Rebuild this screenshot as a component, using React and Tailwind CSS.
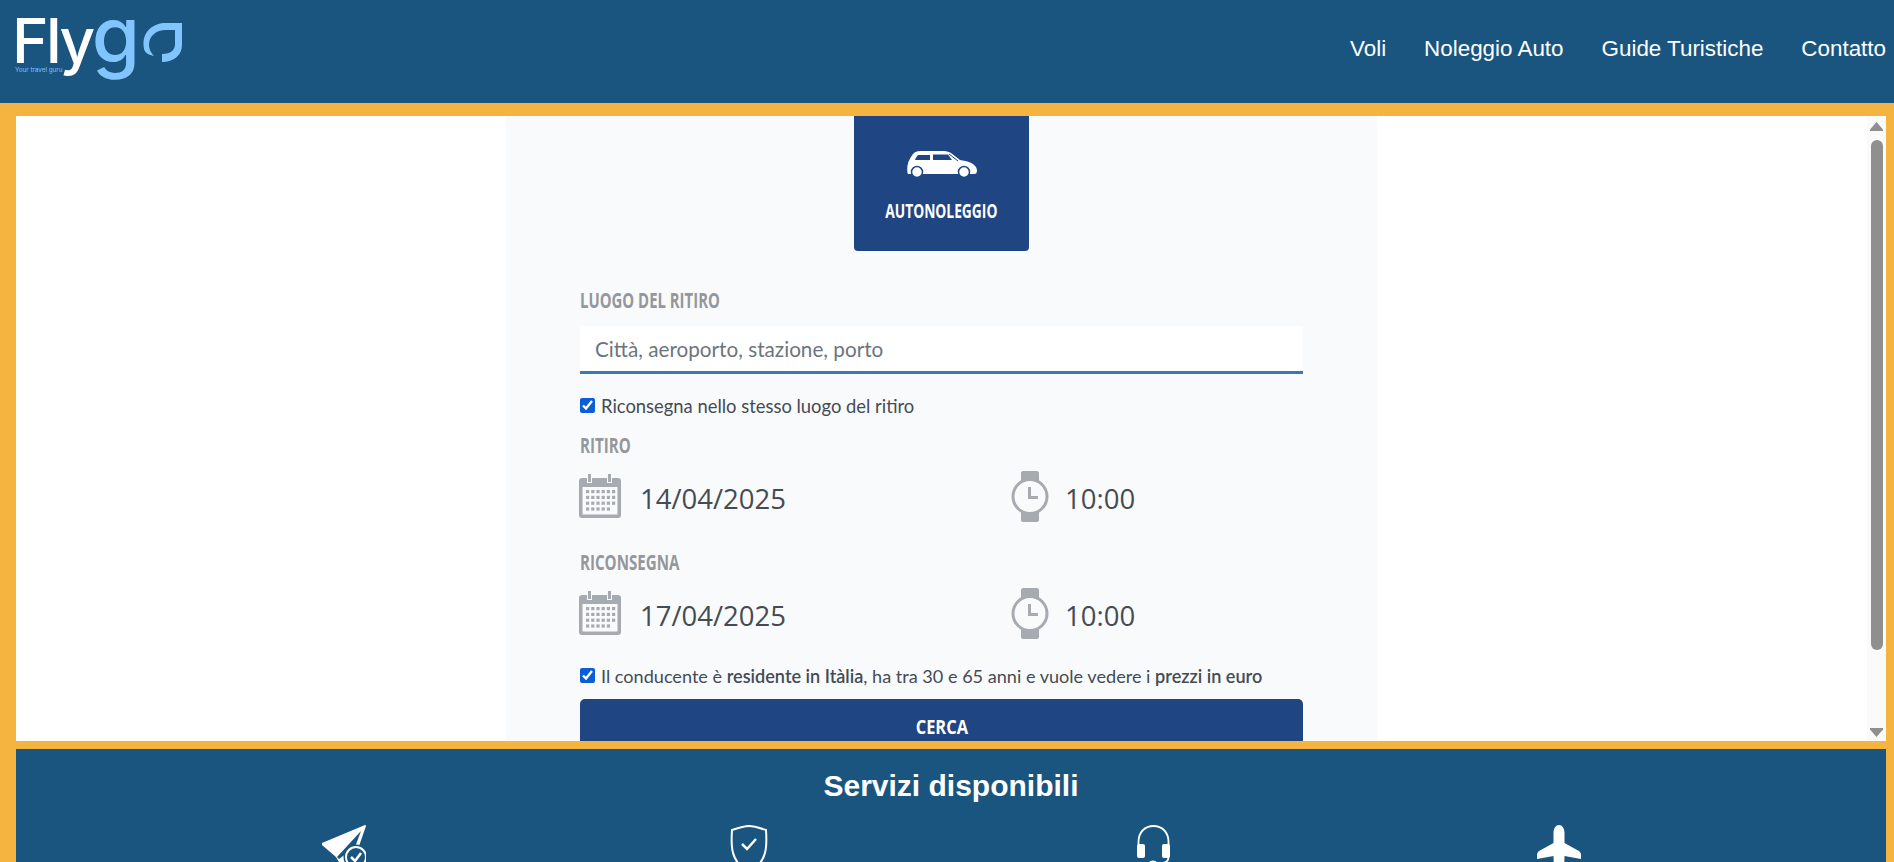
import React from 'react';

const heading = "font-['Open_Sans',sans-serif] font-bold";
const body = "font-['Lato','Open_Sans',sans-serif]";

const Logo = () => (
  <div className="relative h-[103px] w-[200px] ml-[12px]">
    <div className="flex items-baseline -mt-[4px] font-['Inter',sans-serif] font-medium">
      <span className="text-white text-[62px] leading-none tracking-[-2.500px]">Fly</span>
      <span className="text-[#82c4fe] text-[78px] leading-none -ml-[1px]">g</span>
      <svg width="42" height="42" viewBox="0 0 42 42" className="ml-[2px]">
        <path d="M2 28C-1 12 10 2 24 2H40V24C40 34 32 41 20 41V33C29 33 33 29 33 23V9H24C14 9 7 15 7 24C7 28 9 32 12 35C7 34 3 32 2 28Z" fill="#82c4fe" />
      </svg>
    </div>
    <span className="absolute left-[3px] top-[65px] font-['Inter',sans-serif] text-[6.300px] leading-[10px] text-[#82c4fe] whitespace-nowrap">Your travel guru</span>
  </div>
);

const CarIcon = () => (
  <svg width="70" height="27" viewBox="0 0 70 27" fill="none">
    <path d="M1 13C1 11 4 5 7 2C8 1 10 0 15 0H37C40 0 42 1 44 2L53 9C60 10 69 12 70 19C70 22 69 23 67 23H1C0 23 0 14 1 13Z" fill="white" />
    <path d="M11 4H23V9H8C8.500 7 10 5 11 4ZM26 3.500H41L45 9H26Z" fill="#204583" />
    <path d="M42 3L51 10" stroke="#204583" strokeWidth="1" />
    <circle cx="10" cy="21" r="5.500" fill="white" stroke="#204583" strokeWidth="1.500" />
    <circle cx="57" cy="21" r="5.500" fill="white" stroke="#204583" strokeWidth="1.500" />
  </svg>
);

const CalendarIcon = () => (
  <svg width="42" height="44" viewBox="0 0 42 44" className="-ml-px">
    <path d="M3 4H8V9H13V4H28V9H33V4H39C41 4 42 5 42 7V41C42 43 41 44 39 44H3C1 44 0 43 0 41V7C0 5 1 4 3 4Z" fill="#a6abb2" />
    <rect x="9" y="0" width="3" height="8" fill="#a6abb2" />
    <rect x="29" y="0" width="3" height="8" fill="#a6abb2" />
    <rect x="3.500" y="13" width="35" height="27.500" fill="#f9fafc" />
    {[0, 1, 2, 3].map((row) =>
      [0, 1, 2, 3, 4, 5].map((col) =>
        row === 3 && col === 5 ? null : (
          <rect key={`${row}-${col}`} x={7 + col * 5.200} y={16 + row * 5.800} width="3.200" height="3.200" fill="#a6abb2" />
        )
      )
    )}
  </svg>
);

const WatchIcon = () => (
  <svg width="38" height="51" viewBox="0 0 38 51">
    <path d="M10 10V2C10 1 11 0 12 0H26C27 0 28 1 28 2V10Z" fill="#a6abb2" />
    <path d="M10 41V49C10 50 11 51 12 51H26C27 51 28 50 28 49V41Z" fill="#a6abb2" />
    <circle cx="19" cy="25.500" r="17" fill="#f9fafc" stroke="#a6abb2" strokeWidth="3" />
    <path d="M17 16H20V25H27V28H17Z" fill="#a6abb2" />
  </svg>
);

const ScrollBar = () => (
  <div className="w-[19px] shrink-0 bg-[#fafafa] flex flex-col items-center pt-[6px]">
    <svg width="13" height="9" viewBox="0 0 13 9"><path d="M6.500 0L13 7.500V9H0V7.500Z" fill="#8f8f8f" /></svg>
    <div className="w-[12px] h-[510px] mt-[9px] rounded-[6px] bg-[#8f8f8f]"></div>
    <svg width="13" height="9" viewBox="0 0 13 9" className="mt-[78px]"><path d="M0 0H13V1.500L6.500 9L0 1.500Z" fill="#8f8f8f" /></svg>
  </div>
);

const DateRow = ({ date, time }) => (
  <div className="flex items-center h-[52px] mt-[13px] text-[27.500px] text-[#444b54] font-['Open_Sans',sans-serif]">
    <div className="w-[431px] flex items-center gap-[19px]">
      <CalendarIcon />
      <span className="mt-[5px]">{date}</span>
    </div>
    <div className="flex items-center gap-[16px]">
      <WatchIcon />
      <span className="mt-[5px]">{time}</span>
    </div>
  </div>
);

const Label = ({ className, scale, children }) => (
  <div className={`h-6 leading-6 text-[21px] text-[#94979b] whitespace-nowrap ${heading} ${className}`}>
    <span className={`inline-block origin-left ${scale}`}>{children}</span>
  </div>
);

const services = [
  <svg key="send" width="44" height="48" viewBox="0 0 44 48" fill="white">
    <path d="M43 0C44 0 44 1 44 1L36 24L24 44L21 44L14 32L0 20V18Z" />
    <path d="M39 6L15 32L17 34L33 22Z" fill="#1a5580" />
    <circle cx="34" cy="32" r="12.500" fill="#1a5580" />
    <circle cx="34" cy="32" r="10" fill="none" stroke="white" strokeWidth="2" />
    <path d="M29 32L33 36L39 28" fill="none" stroke="white" strokeWidth="2.500" />
  </svg>,
  <svg key="shield" width="38" height="48" viewBox="0 0 38 48" fill="none" stroke="white" strokeWidth="2">
    <path d="M19 1C24 1 30 3 36 5C37 20 38 37 19 47C0 37 1 20 2 5C8 3 14 1 19 1Z" />
    <path d="M12 19L17 24L26 14" strokeWidth="2.500" />
  </svg>,
  <svg key="headset" width="33" height="48" viewBox="0 0 33 48" fill="none" stroke="white" strokeWidth="1.800">
    <path d="M1.500 20V17C1.500 7 8 1 16.500 1C25 1 31.500 7 31.500 17V32C31.500 36 29 38 24 38H19" />
    <rect x="0" y="19" width="8" height="14" rx="2" fill="white" stroke="none" />
    <rect x="25" y="19" width="8" height="14" rx="2" fill="white" stroke="none" />
    <ellipse cx="16" cy="38" rx="4" ry="2.500" fill="white" stroke="none" />
  </svg>,
  <svg key="plane" width="44" height="48" viewBox="0 0 44 48" fill="white">
    <path d="M22 0C25 0 27.500 3 27.500 8V18L41 25.500C43 26.500 44 28 44 30V34L27.500 31L27 48H17L16.500 31L0 34V30C0 28 1 26.500 3 25.500L16.500 18V8C16.500 3 19 0 22 0Z" />
  </svg>,
];

const App = () => {
  return (
    <div className="h-screen overflow-hidden flex flex-col bg-[#f4b43f]">
      <header className="h-[103px] shrink-0 bg-[#1a5580] flex justify-between">
        <Logo />
        <nav className="flex items-center gap-[38px] pr-[8px] pb-[6px] text-[22.400px] text-white font-['Liberation_Sans',Arial,sans-serif]">
          <a>Voli</a>
          <a>Noleggio Auto</a>
          <a>Guide Turistiche</a>
          <a>Contatto</a>
        </nav>
      </header>

      <main className="h-[625px] shrink-0 mt-[13px] ml-[16px] mr-[8px] bg-white flex overflow-hidden">
        <div className="flex-1 flex justify-center">
          <div className="w-[871px] h-[700px] bg-[#f9fafc] px-[74px]">
            <div className="w-[175px] h-[135px] mx-auto bg-[#204583] rounded-b-[4px] flex flex-col items-center pt-[35px]">
              <CarIcon />
              <span className={`mt-[21px] text-[20px] leading-6 text-white whitespace-nowrap scale-x-[.69] ${heading}`}>AUTONOLEGGIO</span>
            </div>

            <Label className="mt-[37px]" scale="scale-x-[.71]">LUOGO DEL RITIRO</Label>
            <input
              type="text"
              placeholder="Città, aeroporto, stazione, porto"
              className={`block w-full h-[48px] mt-[14px] px-[15px] bg-white border-b-[3px] border-[#3f77b5] text-[20.700px] outline-none placeholder:text-[#6c757d] ${body}`}
            />
            <label className={`flex items-center gap-[6px] h-6 mt-[21px] text-[18.400px] text-[#444b54] ${body}`}>
              <input type="checkbox" defaultChecked className="w-[15px] h-[15px] accent-[#0b5ed7] -mt-[4px]" />
              Riconsegna nello stesso luogo del ritiro
            </label>

            <Label className="mt-[14px]" scale="scale-x-[.72]">RITIRO</Label>
            <DateRow date="14/04/2025" time="10:00" />
            <Label className="mt-[28px]" scale="scale-x-[.72]">RICONSEGNA</Label>
            <DateRow date="17/04/2025" time="10:00" />

            <label className={`flex items-center gap-[6px] h-6 mt-[26px] text-[18.100px] text-[#444b54] ${body}`}>
              <input type="checkbox" defaultChecked className="w-[15px] h-[15px] accent-[#0b5ed7] -mt-[4px]" />
              <span>Il conducente è <b className="font-semibold">residente in Itàlia</b>, ha tra 30 e 65 anni e vuole vedere i <b className="font-semibold">prezzi in euro</b></span>
            </label>

            <button className={`block w-full h-[56px] mt-[10px] rounded-[5px] bg-[#204583] text-white text-[20px] ${heading}`}>
              <span className="inline-block scale-x-[.82]">CERCA</span>
            </button>
          </div>
        </div>
        <ScrollBar />
      </main>

      <section className="flex-1 mt-[8px] ml-[16px] mr-[8px] bg-[#1a5580] overflow-hidden pt-[19px]">
        <h2 className="text-center text-[30px] leading-9 font-bold text-white font-['Liberation_Sans',Arial,sans-serif]">Servizi disponibili</h2>
        <div className="w-[1620px] mx-auto mt-[21px] grid grid-cols-4">
          {services.map((icon, i) => (
            <div key={i} className="flex justify-center">{icon}</div>
          ))}
        </div>
      </section>
    </div>
  );
};

export default App;
